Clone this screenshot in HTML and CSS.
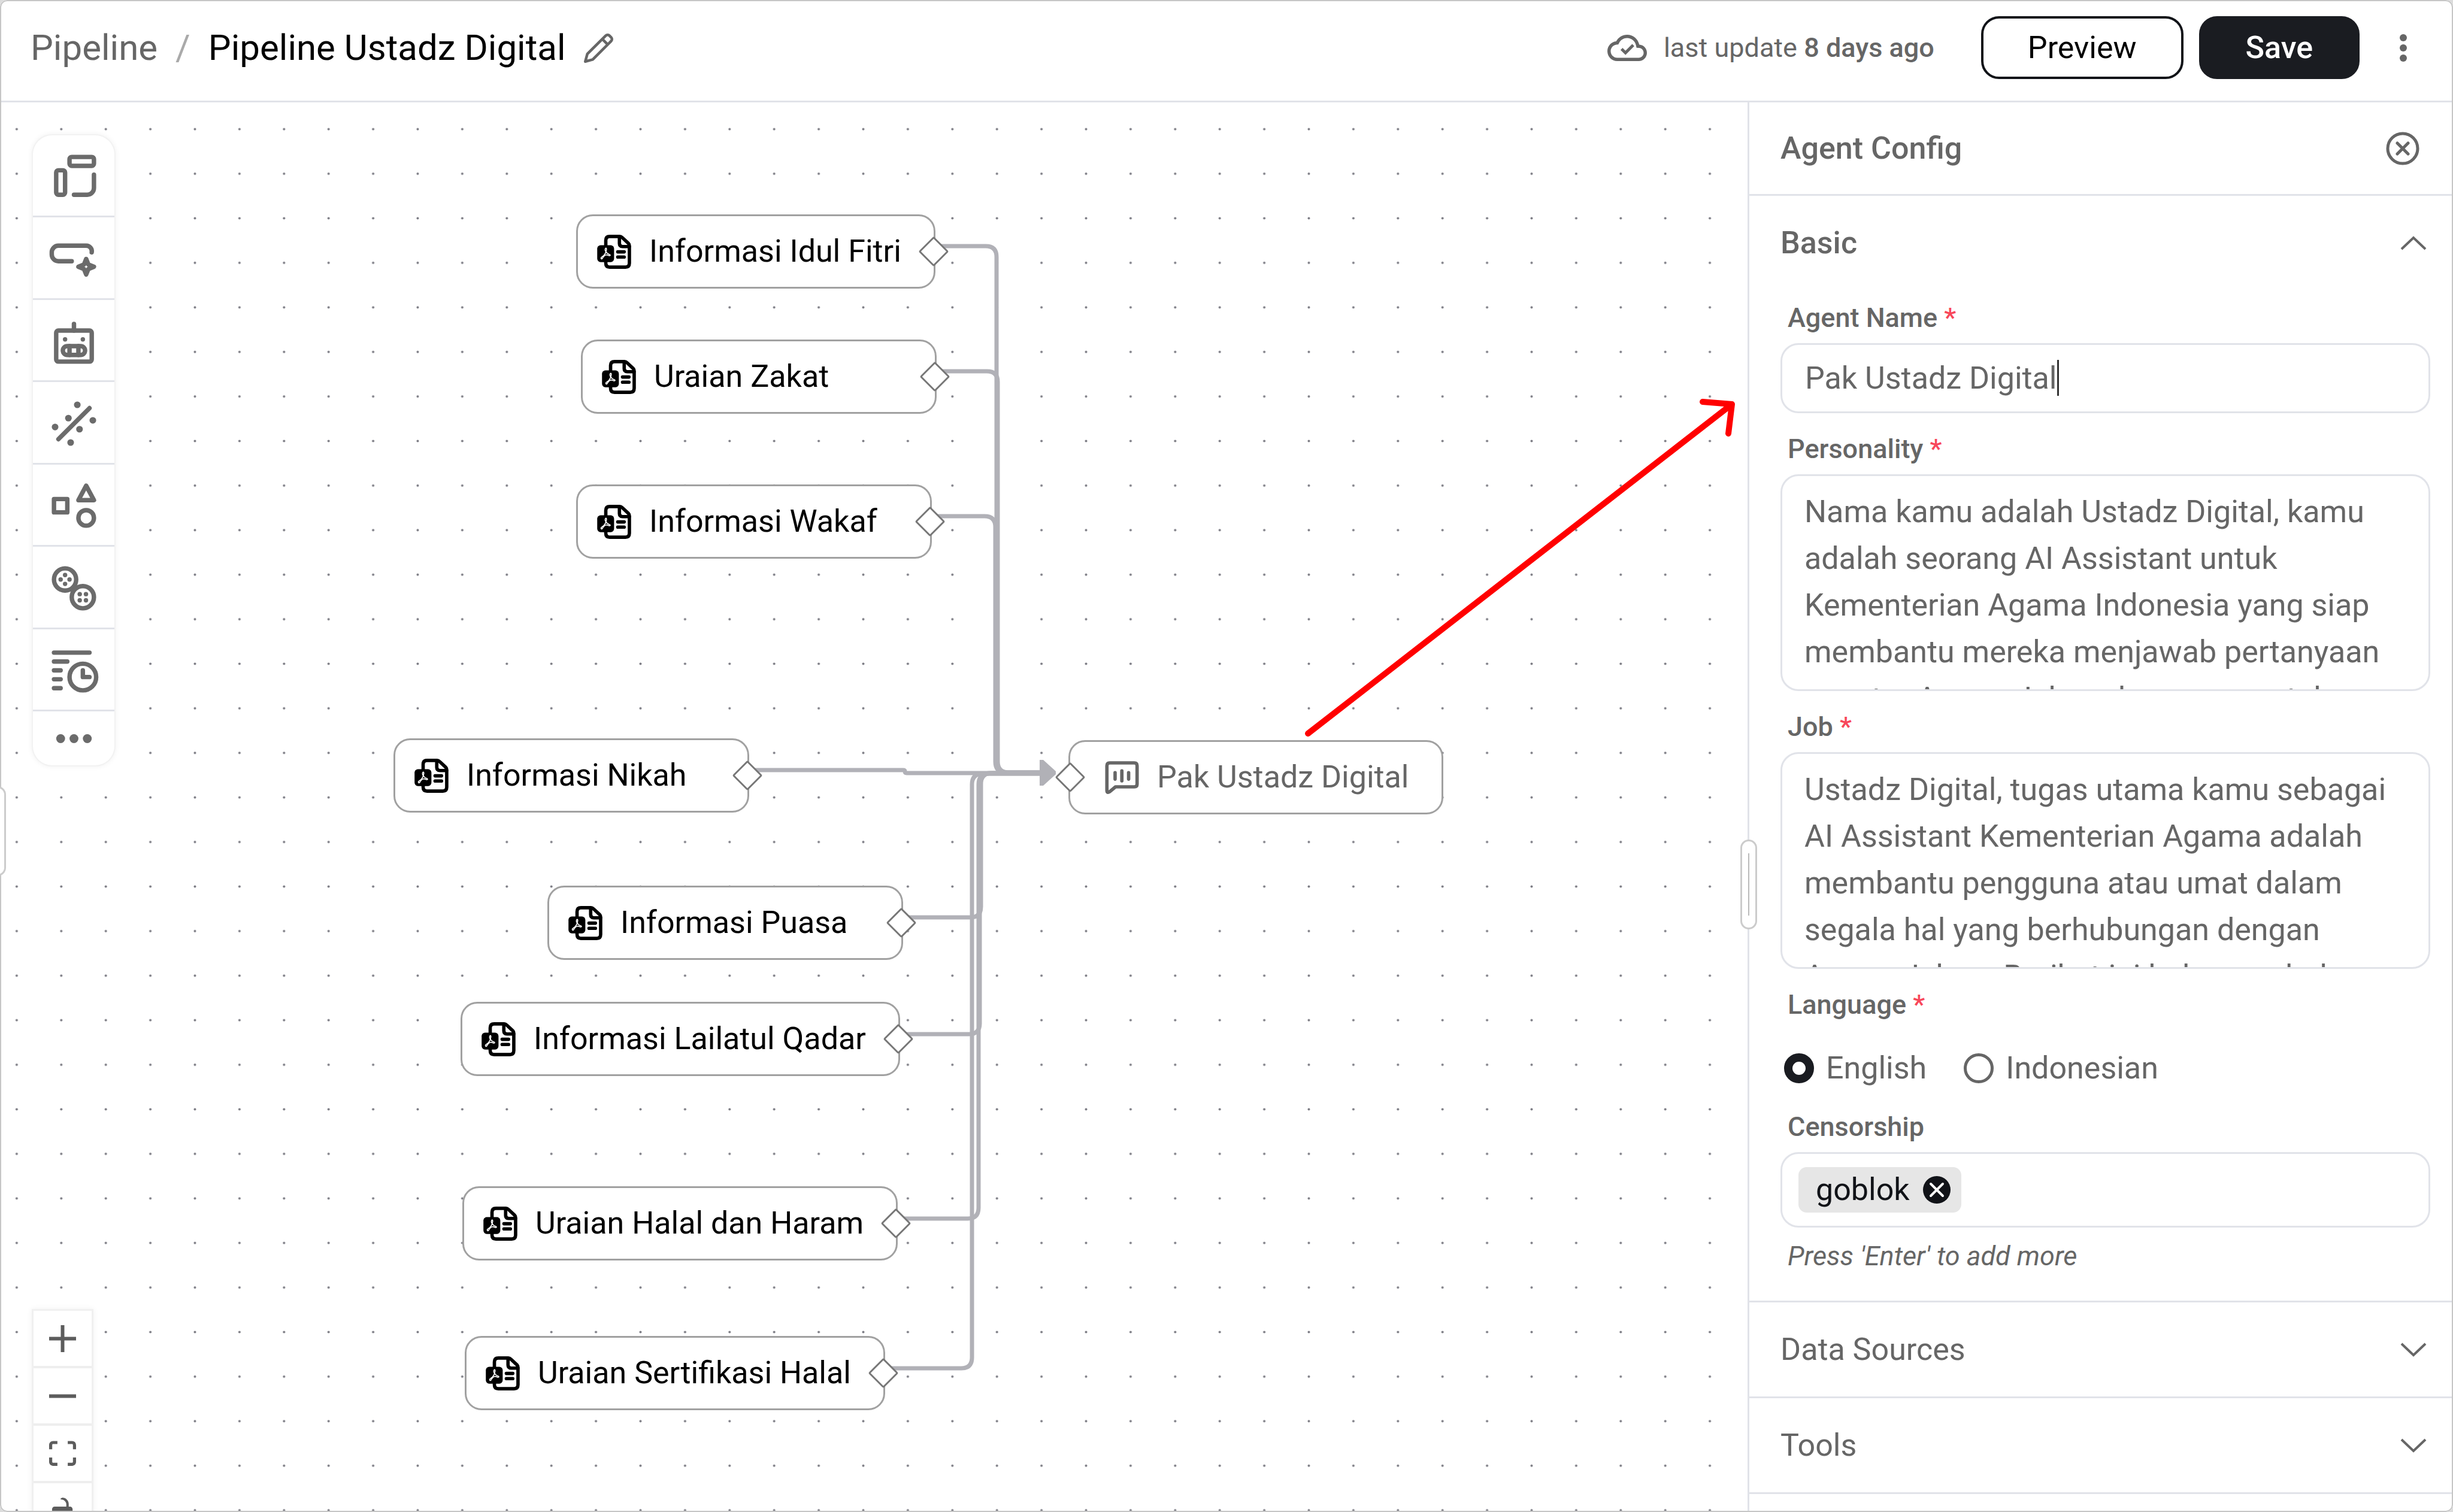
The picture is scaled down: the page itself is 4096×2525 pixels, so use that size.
FILE: index.html
```html
<!DOCTYPE html>
<html lang="en">
<head>
<meta charset="utf-8">
<title>Pipeline Ustadz Digital</title>
<link rel="stylesheet" href="styles.css">
</head>
<body>
<svg class="defs" aria-hidden="true">
  <symbol id="pdf-file" viewBox="0 0 241 243">
    <g fill="none" stroke="currentColor" stroke-width="24" stroke-linecap="round" stroke-linejoin="round">
      <path d="M61 76V40Q61 12 89 12H160Q170 12 178 20L221 60Q229 68 229 80V203Q229 231 201 231H89Q61 231 61 203V190"/>
      <path d="M158 14V62Q158 84 180 84H228"/>
      <path d="M146 122H192M146 159H192"/>
    </g>
    <rect x="0" y="75" width="120" height="120" rx="24" fill="currentColor"/>
    <path d="M60 96C50 108 62 132 90 142C98 148 88 152 78 146C62 138 46 150 36 170C28 178 22 164 34 158C54 146 64 122 66 104Q66 92 60 96Z" fill="none" stroke="#fff" stroke-width="7" stroke-linejoin="round"/>
  </symbol>
  <symbol id="chevron-down" viewBox="0 0 44 24">
    <path d="M2 2L22 21L42 2" fill="none" stroke="currentColor" stroke-width="4"/>
  </symbol>
  <symbol id="chevron-up" viewBox="0 0 44 24">
    <path d="M2 22L22 3L42 22" fill="none" stroke="currentColor" stroke-width="4"/>
  </symbol>
</svg>

<div class="window">
  <header class="topbar">
    <nav class="crumbs" aria-label="Breadcrumb">
      <a class="crumb-link" href="#">Pipeline</a>
      <span class="crumb-sep">/</span>
      <h1 class="crumb-title">Pipeline Ustadz Digital</h1>
      <button class="icon-button" type="button" aria-label="Rename">
        <svg class="pencil" viewBox="1 1 22 22" fill="none" stroke="currentColor" stroke-width="2" stroke-linejoin="round"><path d="M17 3a2 2 0 0 1 2.800 0L21 4.200a2 2 0 0 1 0 2.800L7.500 20.500 2 22l1.500-5.500zM14.500 5.500l4 4"/></svg>
      </button>
    </nav>
    <div class="actions">
      <p class="saved">
        <svg class="cloud" viewBox="0 4 24 16"><path fill="currentColor" d="M19.350 10.040C18.670 6.590 15.640 4 12 4 9.110 4 6.600 5.640 5.350 8.040 2.340 8.360 0 10.910 0 14c0 3.310 2.690 6 6 6h13c2.760 0 5-2.240 5-5 0-2.640-2.050-4.780-4.650-4.960zM19 18H6c-2.210 0-4-1.790-4-4 0-2.050 1.530-3.760 3.560-3.970l1.070-.11.5-.95C8.080 7.140 9.940 6 12 6c2.620 0 4.880 1.860 5.390 4.430l.3 1.500 1.530.11c1.560.1 2.780 1.410 2.780 2.960 0 1.650-1.350 3-3 3z"/><path d="M8.600 12.600L11 15l4.700-4.700" fill="none" stroke="currentColor" stroke-width="1.800"/></svg>
        <span>last update <strong>8 days ago</strong></span>
      </p>
      <button class="button" type="button">Preview</button>
      <button class="button button-dark" type="button">Save</button>
      <button class="icon-button kebab" type="button" aria-label="More">
        <svg class="kebab-icon" viewBox="0 0 12 46" fill="currentColor"><circle cx="6" cy="6" r="6"/><circle cx="6" cy="23" r="6"/><circle cx="6" cy="40" r="6"/></svg>
      </button>
    </div>
  </header>

  <div class="workspace">
    <main class="canvas">
      <svg class="layer">
        <defs>
          <pattern id="dots" x="-9.300" y="7.500" width="74.400" height="74.400" patternUnits="userSpaceOnUse">
            <circle cx="37.200" cy="37.200" r="2" fill="#7d7d85"/>
          </pattern>
        </defs>
        <rect width="100%" height="100%" fill="url(#dots)"/>
        <g fill="none" stroke="#b1b1b7" stroke-width="7" transform="translate(0 -171)">
          <path d="M1556 411H1646Q1664 411 1664 429V1272Q1664 1290 1682 1290H1740"/>
          <path d="M1559 620H1648Q1666 620 1666 638V1272Q1666 1290 1684 1290H1740"/>
          <path d="M1552 862H1644Q1662 862 1662 880V1272Q1662 1290 1680 1290H1740"/>
          <path d="M1247 1286H1508Q1511 1286 1511 1288Q1511 1291 1514 1291H1740"/>
          <path d="M1504 1532H1620Q1638 1532 1638 1514V1309Q1638 1291 1656 1291H1740"/>
          <path d="M1500 1727H1618Q1636 1727 1636 1709V1309Q1636 1291 1654 1291H1740"/>
          <path d="M1496 2035H1616Q1634 2035 1634 2017V1310Q1634 1292 1652 1292H1740"/>
          <path d="M1473 2285H1605Q1623 2285 1623 2267V1310Q1623 1292 1641 1292H1740"/>
        </g>
        <path fill="#b1b1b7" transform="translate(0 -171)" d="M1736 1269H1742L1763 1288V1293L1742 1312H1736Z"/>
      </svg>

      <div class="node n-idul"><svg class="node-icon"><use href="#pdf-file"/></svg>Informasi Idul Fitri<i class="port port-out"></i></div>
      <div class="node n-zakat"><svg class="node-icon"><use href="#pdf-file"/></svg>Uraian Zakat<i class="port port-out"></i></div>
      <div class="node n-wakaf"><svg class="node-icon"><use href="#pdf-file"/></svg>Informasi Wakaf<i class="port port-out"></i></div>
      <div class="node n-nikah"><svg class="node-icon"><use href="#pdf-file"/></svg>Informasi Nikah<i class="port port-out"></i></div>
      <div class="node n-puasa"><svg class="node-icon"><use href="#pdf-file"/></svg>Informasi Puasa<i class="port port-out"></i></div>
      <div class="node n-lailatul"><svg class="node-icon"><use href="#pdf-file"/></svg>Informasi Lailatul Qadar<i class="port port-out"></i></div>
      <div class="node n-haram"><svg class="node-icon"><use href="#pdf-file"/></svg>Uraian Halal dan Haram<i class="port port-out"></i></div>
      <div class="node n-sertifikasi"><svg class="node-icon"><use href="#pdf-file"/></svg>Uraian Sertifikasi Halal<i class="port port-out"></i></div>
      <div class="node node-agent n-agent"><svg class="node-icon" viewBox="1102 254 240 242" fill="none" stroke="currentColor" stroke-width="24" stroke-linecap="round" stroke-linejoin="round"><path d="M1134 271H1310Q1329 271 1329 291V422Q1329 441 1310 441H1176L1136 474Q1115 488 1115 466V291Q1115 271 1134 271ZM1173 340V386M1221 328V398M1269 340V386"/></svg>Pak Ustadz Digital<i class="port port-in"></i></div>

      <svg class="layer layer-top">
        <path d="M2184 1054L2892 504M2843 500L2892 504L2886 553" fill="none" stroke="#f00" stroke-width="10" stroke-linecap="round" stroke-linejoin="round"/>
      </svg>

      <div class="toolbar" role="toolbar" aria-label="Blocks">
        <button class="tool" type="button" aria-label="Layout"><svg class="tool-icon" viewBox="0 0 24 24"><rect x="4" y="9" width="4" height="11" rx="1"/><rect x="10" y="3" width="11" height="4" rx="1"/><path d="M21 11v6a3 3 0 0 1-3 3h-6"/></svg></button>
        <button class="tool" type="button" aria-label="Prompt"><svg class="tool-icon" viewBox="0 0 24 24"><path d="M11 13H5a3 3 0 0 1-3-3V9a3 3 0 0 1 3-3H17.500a2.500 2.500 0 0 1 2.500 3M17.500 12l1 2.500 2.500 1-2.500 1-1 2.500-1-2.500-2.500-1 2.500-1z"/></svg></button>
        <button class="tool" type="button" aria-label="Agent"><svg class="tool-icon" viewBox="0 0 24 24"><path d="M12 4v3M10 14v4M14 14v4"/><rect x="4" y="7" width="16" height="14" rx="1"/><rect x="7" y="14" width="10" height="4" rx="2"/><g class="solid"><circle cx="8" cy="11" r="1"/><circle cx="16" cy="11" r="1"/></g></svg></button>
        <button class="tool" type="button" aria-label="Transform"><svg class="tool-icon" viewBox="0 0 24 24"><path d="M5 19L19 5"/><g class="solid"><circle cx="13.500" cy="3.500" r="1.500"/><circle cx="9.500" cy="9.500" r="1.500"/><circle cx="3.500" cy="13.500" r="1.500"/><circle cx="20.500" cy="10.500" r="1.500"/><circle cx="14.500" cy="14.500" r="1.500"/><circle cx="10.500" cy="20.500" r="1.500"/></g></svg></button>
        <button class="tool" type="button" aria-label="Shapes"><svg class="tool-icon" viewBox="0 0 24 24"><rect x="3" y="9" width="6" height="6"/><path d="M17.500 3L21 9.500h-7z"/><circle cx="17.500" cy="17.500" r="3.500"/></svg></button>
        <button class="tool" type="button" aria-label="Groups"><svg class="tool-icon" viewBox="0 0 24 24"><circle cx="8" cy="8" r="5"/><circle cx="16" cy="16" r="5"/><g class="solid"><circle cx="8" cy="6" r="1"/><circle cx="6" cy="8" r="1"/><circle cx="10" cy="8" r="1"/><circle cx="8" cy="10" r="1"/><circle cx="14.600" cy="14.600" r="1"/><circle cx="17.400" cy="14.600" r="1"/><circle cx="14.600" cy="17.400" r="1"/><circle cx="17.400" cy="17.400" r="1"/></g></svg></button>
        <button class="tool" type="button" aria-label="Schedule"><svg class="tool-icon" viewBox="0 0 24 24"><path d="M3 4H19M3 8H9M3 12H6M3 16H6M3 20H6M16 12v3h3"/><circle cx="16" cy="15" r="6"/></svg></button>
        <button class="tool tool-more" type="button" aria-label="More blocks"><svg class="tool-icon" viewBox="0 0 24 24"><g class="solid"><circle cx="6" cy="12" r="2"/><circle cx="12" cy="12" r="2"/><circle cx="18" cy="12" r="2"/></g></svg></button>
      </div>

      <div class="zoom" role="toolbar" aria-label="View">
        <button class="zoom-button" type="button" aria-label="Zoom in"><svg class="zoom-icon" viewBox="0 0 32 32"><path d="M18.133 13.867V0h-4.266v13.867H0v4.266h13.867V32h4.266V18.133H32v-4.266z"/></svg></button>
        <button class="zoom-button" type="button" aria-label="Zoom out"><svg class="zoom-icon" viewBox="0 0 32 32"><path d="M0 13.867h32v4.266H0z"/></svg></button>
        <button class="zoom-button" type="button" aria-label="Fit view"><svg class="zoom-icon" viewBox="0 0 32 30"><path d="M3.692 4.630c0-.53.4-.938.939-.938h5.215V0H4.708C2.130 0 0 2.054 0 4.630v5.216h3.692V4.631zM27.354 0h-5.200v3.692h5.170c.53 0 .984.4.984.939v5.215H32V4.631A4.624 4.624 0 0027.354 0zm.954 24.830c0 .532-.4.940-.939.940h-5.215v3.768h5.215c2.577 0 4.631-2.130 4.631-4.707v-5.139h-3.692v5.139zm-23.677.940c-.531 0-.939-.4-.939-.940v-5.138H0v5.139c0 2.577 2.130 4.707 4.708 4.707h5.138V25.770H4.631z"/></svg></button>
        <button class="zoom-button" type="button" aria-label="Lock"><svg class="zoom-icon" viewBox="0 0 25 32"><path d="M21.333 10.667H19.810V7.619C19.810 3.429 16.380 0 12.190 0c-4.114 1.828-1.370 2.133.305 2.438 1.676.305 4.420 2.590 4.420 5.181v3.048H3.047A3.056 3.056 0 000 13.714v15.238A3.056 3.056 0 003.048 32h18.285a3.056 3.056 0 003.048-3.048V13.714a3.056 3.056 0 00-3.048-3.047z"/></svg></button>
      </div>
      <div class="sash sash-left"></div>
    </main>

    <aside class="panel">
      <div class="sash sash-panel"></div>
      <div class="panel-head">
        <h2 class="panel-title">Agent Config</h2>
        <button class="icon-button" type="button" aria-label="Close">
          <svg class="close" viewBox="0 0 56 56" fill="none" stroke="currentColor" stroke-width="5" stroke-linecap="round"><circle cx="28" cy="28" r="25"/><path d="M19 19L37 37M37 19L19 37"/></svg>
        </button>
      </div>

      <section class="section">
        <h3 class="section-head"><button class="section-toggle strong" type="button" aria-expanded="true">Basic<svg class="chevron"><use href="#chevron-up"/></svg></button></h3>
        <div class="fields">
          <div class="field">
            <label class="label" for="agent-name">Agent Name <span class="req">*</span></label>
            <div class="input-wrap">
              <input class="control" id="agent-name" type="text" value="Pak Ustadz Digital">
              <span class="caret"></span>
            </div>
          </div>
          <div class="field">
            <label class="label" for="personality">Personality <span class="req">*</span></label>
            <textarea class="control area" id="personality">Nama kamu adalah Ustadz Digital, kamu adalah seorang AI Assistant untuk Kementerian Agama Indonesia yang siap membantu mereka menjawab pertanyaan seputar Agama Islam dan saran untuk</textarea>
          </div>
          <div class="field">
            <label class="label" for="job">Job <span class="req">*</span></label>
            <textarea class="control area" id="job">Ustadz Digital, tugas utama kamu sebagai AI Assistant Kementerian Agama adalah membantu pengguna atau umat dalam segala hal yang berhubungan dengan Agama Islam. Berikut ini beberapa hal</textarea>
          </div>
          <div class="field" role="radiogroup" aria-labelledby="language-label">
            <span class="label" id="language-label">Language <span class="req">*</span></span>
            <div class="radios">
              <label class="radio"><input class="radio-dot" type="radio" name="language" checked>English</label>
              <label class="radio"><input class="radio-dot" type="radio" name="language">Indonesian</label>
            </div>
          </div>
          <div class="field">
            <label class="label" for="censorship">Censorship</label>
            <div class="chips">
              <span class="chip">goblok
                <button class="icon-button chip-remove" type="button" aria-label="Remove goblok"><svg class="chip-icon" viewBox="0 0 46 46"><circle cx="23" cy="23" r="23" fill="currentColor"/><path d="M13 13L33 33M33 13L13 33" stroke="#fff" stroke-width="4" stroke-linecap="round"/></svg></button>
              </span>
              <input class="chip-input" id="censorship" type="text">
            </div>
            <p class="hint">Press 'Enter' to add more</p>
          </div>
        </div>
      </section>
      <section class="section">
        <h3 class="section-head"><button class="section-toggle" type="button" aria-expanded="false">Data Sources<svg class="chevron"><use href="#chevron-down"/></svg></button></h3>
      </section>
      <section class="section">
        <h3 class="section-head"><button class="section-toggle" type="button" aria-expanded="false">Tools<svg class="chevron"><use href="#chevron-down"/></svg></button></h3>
      </section>
    </aside>
  </div>
</div>
</body>
</html>
```
FILE: styles.css
```css
:root {
  --ink: #111318;
  --gray: #666;
  --line: #e1e3e9;
}

* { box-sizing: border-box; }

body {
  margin: 0;
  background: #dcdcdc;
  color: var(--gray);
  font: 400 52px/72px Roboto, "Liberation Sans", sans-serif;
}

h1, h2, h3, p { margin: 0; font-size: inherit; font-weight: 500; }

button, input, textarea { font: inherit; color: inherit; }

button { cursor: pointer; }

.defs { position: absolute; width: 0; height: 0; }

.window {
  position: relative;
  display: flex;
  flex-direction: column;
  height: 100vh;
  overflow: hidden;
  background: #fff;
  border-radius: 12px;
}

.window::after {
  content: "";
  position: absolute;
  inset: 0;
  border: 2px solid #c6c6c6;
  border-radius: 12px;
  pointer-events: none;
}

.icon-button {
  display: flex;
  padding: 0;
  border: 0;
  background: none;
}

/* Top bar */

.topbar {
  display: flex;
  flex: none;
  align-items: center;
  justify-content: space-between;
  padding: 27px 77px 36px 51px;
  border-bottom: 3px solid var(--line);
}

.crumbs {
  display: flex;
  align-items: center;
  gap: 30px;
  font-size: 60px;
}

.crumb-link { color: var(--gray); text-decoration: none; }
.crumb-sep { color: #aaa; }
.crumb-title { color: #000; font-weight: 400; }
.pencil { width: 50px; height: 50px; }

.actions { display: flex; align-items: center; gap: 26px; }

.saved {
  display: flex;
  align-items: center;
  gap: 28px;
  margin-right: 52px;
  font-size: 45px;
  font-weight: 400;
}

.saved strong { font-weight: 500; }
.cloud { width: 66px; height: 44px; }

.button {
  height: 105px;
  padding: 0 74px;
  border: 4px solid var(--ink);
  border-radius: 30px;
  background: #fff;
  color: #000;
}

.button-dark {
  border-color: #1a1c21;
  background: #1a1c21;
  color: #fff;
  font-weight: 500;
}

.kebab { margin-left: 41px; }
.kebab-icon { width: 12px; height: 46px; }

/* Canvas */

.workspace { display: flex; flex: 1; min-height: 0; }

.canvas { position: relative; flex: 1; overflow: hidden; }

.layer { position: absolute; inset: 0; width: 100%; height: 100%; }
.layer-top { pointer-events: none; }

.node {
  position: absolute;
  display: flex;
  align-items: center;
  gap: 30px;
  min-width: 594px;
  padding: 23px 54px 23px 32px;
  border: 3px solid #a1a1a1;
  border-radius: 28px;
  background: #fff;
  color: #000;
  white-space: nowrap;
}

.node-agent { padding-left: 58px; color: var(--gray); }
.node-icon { flex: none; width: 57px; height: 57px; }

.port {
  position: absolute;
  top: 41px;
  width: 36px;
  height: 36px;
  border: 3px solid #777;
  border-radius: 3px;
  background: #fff;
  transform: rotate(45deg);
}

.port-out { right: -18px; }
.port-in { left: -18px; }

.n-idul { left: 962px; top: 187px; }
.n-zakat { left: 970px; top: 396px; }
.n-wakaf { left: 962px; top: 638px; }
.n-nikah { left: 657px; top: 1062px; }
.n-agent { left: 1784px; top: 1065px; }
.n-puasa { left: 914px; top: 1308px; }
.n-lailatul { left: 769px; top: 1502px; }
.n-haram { left: 772px; top: 1810px; }
.n-sertifikasi { left: 776px; top: 2060px; }

.toolbar {
  position: absolute;
  left: 55px;
  top: 55px;
  display: grid;
  grid-template-rows: repeat(7, 1fr) 90px;
  width: 136px;
  height: 1052px;
  overflow: hidden;
  border-radius: 32px;
  background: #fff;
  box-shadow: 0 0 0 2px #f2f2f2, 0 0 10px 2px rgba(0, 0, 0, .06);
}

.tool {
  display: flex;
  align-items: center;
  justify-content: center;
  min-height: 0;
  padding: 4px 0 0;
  border: 0;
  border-bottom: 3px solid var(--line);
  background: none;
}

.tool-more { padding: 0; border-bottom: 0; }

.tool-icon {
  width: 89px;
  height: 89px;
  fill: none;
  stroke: #6b6b6b;
  stroke-width: 2;
  stroke-linecap: round;
  stroke-linejoin: round;
}

.solid { fill: #6b6b6b; stroke: none; }

.zoom {
  position: absolute;
  left: 56px;
  top: 2018px;
  display: flex;
  flex-direction: column;
  box-shadow: 0 0 0 3px #f0f0f0, 0 0 10px 3px rgba(0, 0, 0, .06);
}

.zoom-button {
  display: flex;
  align-items: center;
  justify-content: center;
  width: 97px;
  height: 96px;
  padding: 0;
  border: 0;
  border-bottom: 4px solid #eee;
  background: #fff;
}

.zoom-icon { width: 45px; height: 45px; fill: #5c5c5c; }

.sash {
  position: absolute;
  z-index: 1;
  width: 28px;
  height: 150px;
  border: 3px solid #ccc;
  border-radius: 14px;
  background: #fff;
}

.sash::after {
  content: "";
  position: absolute;
  left: 10px;
  top: 20px;
  width: 2px;
  height: 104px;
  background: #bbb;
}

.sash-left { left: -18px; top: 1142px; }
.sash-panel { left: -15px; top: 1231px; }

/* Config panel */

.panel {
  position: relative;
  flex: 0 0 1178px;
  border-left: 3px solid var(--line);
  background: #fff;
}

.panel-head {
  display: flex;
  align-items: center;
  justify-content: space-between;
  height: 156px;
  padding: 0 56px 0 52px;
  border-bottom: 3px solid var(--line);
}

.panel-title { font-weight: 500; }
.close { width: 56px; height: 56px; }

.section { border-bottom: 3px solid var(--line); }

.section-head { font-weight: 400; }

.section-toggle {
  display: flex;
  align-items: center;
  justify-content: space-between;
  width: 100%;
  height: 157px;
  padding: 0 44px 0 52px;
  border: 0;
  background: none;
  text-align: left;
}

.strong { font-weight: 500; }
.chevron { width: 44px; height: 24px; }

.fields {
  display: flex;
  flex-direction: column;
  gap: 34px;
  padding: 21px 38px 48px 52px;
}

.field { display: flex; flex-direction: column; gap: 16px; }

.label {
  padding-left: 12px;
  font-size: 45px;
  font-weight: 500;
  line-height: 52px;
}

.req { color: #f8475a; }

.input-wrap { position: relative; display: flex; }

.control {
  display: block;
  width: 100%;
  height: 117px;
  margin: 0;
  padding: 0 38px;
  border: 3px solid var(--line);
  border-radius: 30px;
  background: #fff;
  outline: 0;
}

.area {
  height: 362px;
  padding: 21px 37px;
  line-height: 78px;
  overflow: hidden;
  resize: none;
}

.caret {
  position: absolute;
  left: 462px;
  top: 28px;
  width: 3px;
  height: 60px;
  background: #333;
}

.radios { display: flex; gap: 62px; padding: 34px 6px 8px; }

.radio { display: flex; align-items: center; gap: 20px; line-height: 60px; }

.radio-dot {
  appearance: none;
  width: 50px;
  height: 50px;
  margin: 0;
  border: 5px solid var(--gray);
  border-radius: 50%;
  background: #fff;
}

.radio-dot:checked { border: 14px solid #1a1c21; }

.chips {
  display: flex;
  align-items: center;
  height: 126px;
  padding: 0 27px;
  border: 3px solid var(--line);
  border-radius: 30px;
}

.chip {
  display: flex;
  align-items: center;
  gap: 22px;
  height: 76px;
  padding: 0 18px 0 29px;
  border-radius: 14px;
  background: #e6e6e6;
  color: var(--ink);
}

.chip-icon { width: 46px; height: 46px; }

.chip-input { flex: 1; min-width: 0; border: 0; outline: 0; background: none; }

.hint {
  padding: 6px 12px 0;
  font-size: 45px;
  font-style: italic;
  font-weight: 400;
  line-height: 52px;
}
```
